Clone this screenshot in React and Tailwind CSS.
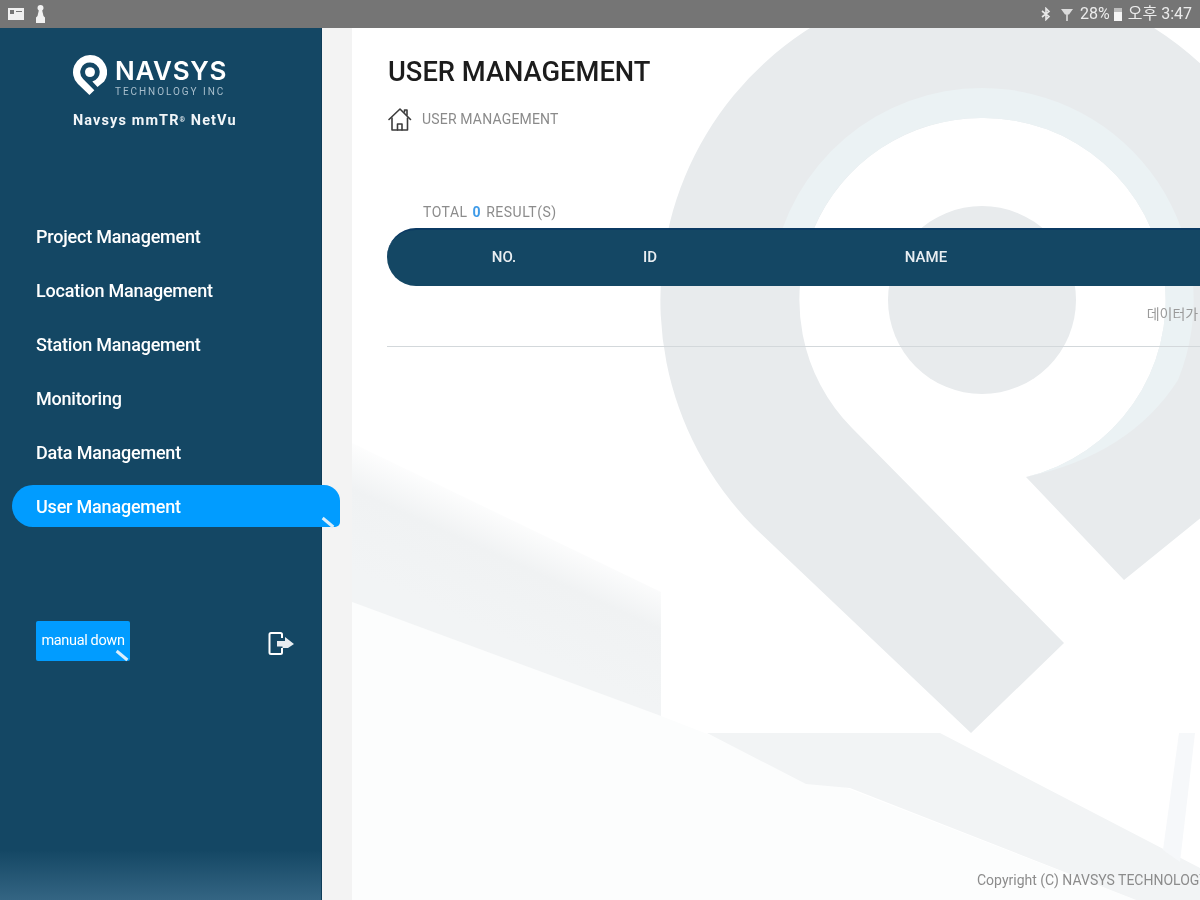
import React from 'react';

const menu = ['Project Management', 'Location Management', 'Station Management', 'Monitoring', 'Data Management', 'User Management'];
const roboto = { fontFamily: 'Roboto, "Noto Sans CJK KR", sans-serif' };

// same outline for the small logo and the big watermark
const PIN_PATH = 'M971 733 1064 643 852 428A182 182 0 0 1 982 118A182 182 0 0 1 1026 477L1124 580 1250 478A322 322 0 0 0 982 -22A322 322 0 0 0 754 527Z';

function PinLogo() {
  return (
    <svg width="34" height="41" viewBox="660 -22 644 772" className="shrink-0">
      <path fill="#fff" d={PIN_PATH} />
      <circle cx="982" cy="300" r="94" fill="#fff" />
    </svg>
  );
}

function HomeIcon() {
  return (
    <svg width="24" height="25" viewBox="0 0 24 25" fill="none" stroke="#3c3c3c" strokeWidth="1.6" strokeLinejoin="round" strokeLinecap="round">
      <path d="M1 12.500 12 2l10.500 10.500" />
      <path d="M16.500 5V3h2.500v5" />
      <path d="M4 11v12h15.500V11" />
      <path d="M9.500 23v-6h4.500v6" />
    </svg>
  );
}

function LogoutIcon() {
  return (
    <svg width="27" height="23" viewBox="0 0 27 23" fill="none" className="mt-[5px]">
      <path d="M14 6V2.500c0-.8-.6-1.500-1.500-1.500H3c-.9 0-1.500.7-1.500 1.500v18c0 .8.6 1.500 1.500 1.500h9.500c.9 0 1.500-.7 1.500-1.500V16" stroke="#fff" strokeWidth="2" />
      <path d="M9 9h8V5l9 7-6 4h-5.500v-1.500H9z" fill="#e8edf1" />
    </svg>
  );
}

function CornerTick({ className }) {
  return <span className={`absolute h-[3px] w-[14px] rotate-[40deg] bg-[#dbeefb] ${className}`} />;
}

function Watermark() {
  return (
    <svg className="absolute inset-0 h-full w-full" viewBox="352 28 848 872" preserveAspectRatio="none">
      <defs>
        <linearGradient id="beamA" gradientUnits="userSpaceOnUse" x1="470" y1="490" x2="420" y2="600">
          <stop offset="0" stopColor="#ffffff" />
          <stop offset="0.4" stopColor="#f0f2f3" />
          <stop offset="1" stopColor="#f2f4f5" />
        </linearGradient>
      </defs>
      <rect x="352" y="28" width="848" height="872" fill="#ffffff" />
      <path d="M352 602 661 716 1200 925V900H352z" fill="#fcfdfd" />
      <path d="M352 443 661 592V716L352 602z" fill="url(#beamA)" />
      <path d="M707 733H940L1200 868V925L850 788 806 784z" fill="#f2f4f5" />
      <path d="M1179 733H1195L1180 862 1163 850z" fill="#f6f8fa" />
      <path fill="#e8ebed" d={PIN_PATH} />
      <path fill="#ebf2f4" d="M804 258A182 182 0 0 1 982 118A182 182 0 0 1 1026 477Q1130 455 1178 380A212 212 0 0 0 982 88A212 212 0 0 0 773 265Z" />
      <circle cx="982" cy="300" r="94" fill="#e8ebed" />
    </svg>
  );
}

export default function App() {
  return (
    <div className="flex h-[900px] w-[1200px] flex-col overflow-hidden bg-white blur-[0.35px]" style={roboto}>
      <div className="flex h-[28px] shrink-0 items-center justify-between bg-[#757575] pl-2 pr-2 text-[#ececec]">
        <div className="flex items-center gap-[11px]">
          <svg width="16" height="14" viewBox="0 0 16 14"><path fillRule="evenodd" fill="#f0f0f0" d="M0 1h16v12H0zM2 3v4h4V3zM8 4v1h6V4z" /></svg>
          <svg width="11" height="18" viewBox="0 0 11 18"><path fill="#f2f2f2" d="M5.500 0C7.500 0 8.500 1.300 8.500 3c0 1.200-.6 2-1.300 2.600L8.500 11l1.500 1.500V18H1v-5.500L2.500 11l1.300-5.400C3.100 5 2.500 4.200 2.500 3c0-1.700 1-3 3-3z" /></svg>
        </div>
        <div className="flex items-center text-[16px] leading-none">
          <svg width="10" height="14" viewBox="0 0 10 14" fill="none" stroke="#e8e8e8" strokeWidth="1.600"><path d="M1 4l7 5.500L5 12.500V1.500L8 4.500 1 10" /></svg>
          <svg className="ml-[10px]" width="12" height="13" viewBox="0 0 12 13"><path fill="#dcdcdc" d="M0 1h12L8 6.500 6.800 6.500V13H5.200V6.500H4z" /></svg>
          <span className="ml-[7px]">28%</span>
          <span className="ml-1 flex h-[13px] w-[8px] flex-col justify-end bg-[#bdbdbd]"><span className="h-[9px] bg-[#f5f5f5]" /></span>
          <span className="ml-[6px]">오후 3:47</span>
        </div>
      </div>

      <div className="flex min-h-0 flex-1">
        <aside className="relative z-20 flex w-[322px] shrink-0 flex-col border-r border-[#0e3c58] bg-[#144764]">
          <div className="flex flex-col pl-[73px] pt-[27px]">
            <div className="flex items-start gap-[8px]">
              <PinLogo />
              <div className="flex flex-col pt-[1px]">
                <span className="text-[26px] font-semibold leading-[29px] tracking-[0.7px] text-white" style={{ fontFamily: 'Inter, sans-serif' }}>NAVSYS</span>
                <span className="mt-[1px] text-[10px] leading-[12px] tracking-[1.95px] text-[#a9bfcd]">TECHNOLOGY INC</span>
              </div>
            </div>
            <div className="mt-[13px] text-[14.500px] font-bold leading-[20px] tracking-[1.1px] text-[#f1f5f8]">Navsys mmTR<sup className="text-[7px]">®</sup> NetVu</div>
          </div>

          <nav className="mt-[78px] flex flex-col">
            {menu.map((item) => {
              const active = item === 'User Management';
              return (
                <div key={item} className="flex h-[54px] items-center">
                  {active ? (
                    <div className="relative ml-3 flex h-[42px] w-[328px] shrink-0 items-center rounded-l-[21px] rounded-tr-[16px] rounded-br-[5px] bg-[#019cff] pl-6 text-[18px] font-medium tracking-[-0.2px] text-white">
                      {item}
                      <CornerTick className="bottom-[3px] right-[5px]" />
                    </div>
                  ) : (
                    <span className="pl-9 text-[18px] font-medium tracking-[-0.2px] text-white">{item}</span>
                  )}
                </div>
              );
            })}
          </nav>

          <div className="mt-[88px] flex items-center justify-between pl-9 pr-[26px]">
            <div className="relative flex h-10 w-[94px] items-center justify-center rounded-[2px] bg-[#019cff] text-[14.500px] leading-none tracking-[-0.35px] text-white">
              manual down
              <CornerTick className="bottom-[4px] right-[1px]" />
            </div>
            <LogoutIcon />
          </div>

          <div className="absolute inset-x-0 bottom-0 h-[50px] bg-linear-to-b from-transparent to-[#346583]" />
        </aside>

        <div className="w-[30px] shrink-0 bg-[#f3f3f3]" />

        <main className="relative flex min-w-0 flex-1 flex-col">
          <Watermark />
          <div className="relative z-10 flex flex-1 flex-col pl-[36px] pt-[26px]">
            <h1 className="text-[27.300px] font-medium leading-[36px] text-[#1c1c1c]">USER MANAGEMENT</h1>
            <div className="mt-[17px] flex h-[25px] items-center gap-[10px]">
              <HomeIcon />
              <span className="text-[14px] tracking-[0.18px] text-[#8a8a8a]">USER MANAGEMENT</span>
            </div>
            <div className="mt-[70px] flex h-5 items-center pl-[35px] text-[14px] tracking-[0.5px] text-[#8c8c8c]">
              TOTAL <span className="mx-[5px] font-bold text-[#3f9be8]">0</span> RESULT(S)
            </div>
            <div className="mt-[6px] w-[1626px] shrink-0 -ml-px">
              <div className="flex h-[58px] items-center rounded-l-[29px] border-t-2 border-[#0b3a63] bg-[#144764] pb-[2px] text-[15px] font-medium text-[#e9eef2]">
                <span className="w-[234px] text-center">NO.</span>
                <span className="w-[58px] text-center">ID</span>
                <span className="w-[494px] text-center">NAME</span>
              </div>
              <div className="flex h-[61px] items-center justify-center border-b border-[#d3d8db] pb-[4px] text-[14px] text-[#9a9a9a]">데이터가 없습니다</div>
            </div>
            <div className="mt-auto ml-[589px] whitespace-nowrap pb-[11px] text-[14px] leading-[18px] text-[#8c8c8c]">Copyright (C) NAVSYS TECHNOLOGY INC. All rights reserved.</div>
          </div>
        </main>
      </div>
    </div>
  );
}
